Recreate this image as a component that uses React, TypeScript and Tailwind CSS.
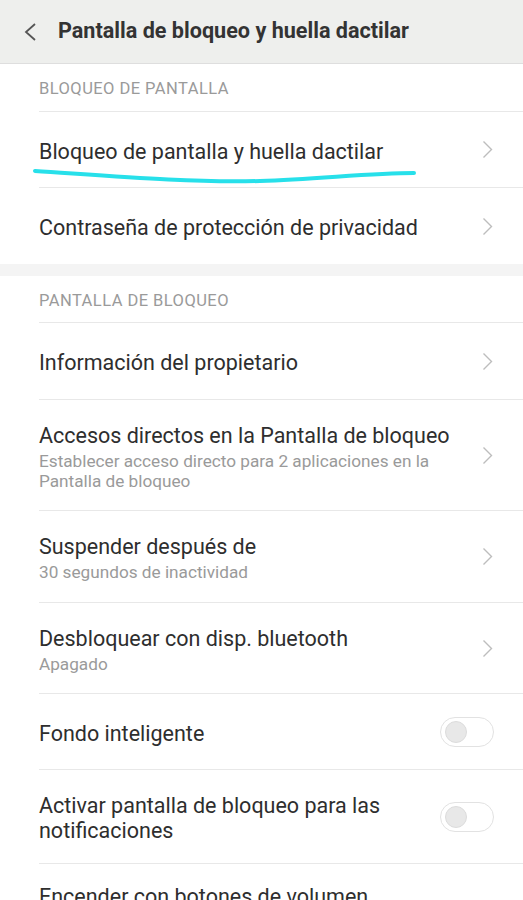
const font = { fontFamily: "Roboto, 'Noto Sans', sans-serif" };

function Chevron() {
  return (
    <svg width="11" height="19" viewBox="0 0 11 19" fill="none">
      <polyline points="1.5,1.5 9.5,9.5 1.5,17.5" stroke="#bdbdbd" strokeWidth="1.4" />
    </svg>
  );
}

function Toggle() {
  return (
    <div className="flex h-[30px] w-[54px] items-center rounded-full border border-[#e2e2e2] bg-white px-[4px]">
      <div className="h-[22px] w-[22px] rounded-full border border-[#dcdcdc] bg-[#e8e8e8]" />
    </div>
  );
}

function SectionHeader({ label, h }: { label: string; h: string }) {
  return (
    <div className="pl-[39px]">
      <div className={`flex items-center border-b border-[#e8e8e8] text-[16.5px] tracking-[0.45px] text-[#9a9a9a] ${h}`}>{label}</div>
    </div>
  );
}

function Row({
  title,
  sub,
  h,
  toggle,
  last,
}: {
  title: React.ReactNode;
  sub?: React.ReactNode;
  h: string;
  toggle?: boolean;
  last?: boolean;
}) {
  return (
    <div className="pl-[39px]">
      <div className={`flex items-center pr-[29px] ${h} ${last ? "" : "border-b border-[#e8e8e8]"}`}>
        <div className={`flex-1 pt-[3px] ${toggle ? "pr-[36px]" : "pr-[14px]"}`}>
          <div className="text-[21.5px] leading-[25px] text-[#2e2e2e]">{title}</div>
          {sub && <div className="mt-[3px] text-[17.2px] leading-[20px] text-[#9a9a9a]">{sub}</div>}
        </div>
        {toggle ? <Toggle /> : <div className="pr-[1px]"><Chevron /></div>}
      </div>
    </div>
  );
}

export default function App() {
  return (
    <div className="h-[900px] w-[523px] overflow-hidden bg-white" style={font}>
      {/* Header */}
      <div className="flex h-[64px] items-center border-b border-[#dedede] bg-[#eeefed]">
        <div className="pl-[24px] pr-[22px]">
          <svg width="12" height="18" viewBox="0 0 12 18" fill="none">
            <polyline points="11,1 2,9 11,17" stroke="#555" strokeWidth="1.8" />
          </svg>
        </div>
        <div className="text-[21.6px] font-bold text-[#333]">Pantalla de bloqueo y huella dactilar</div>
      </div>

      <SectionHeader label="BLOQUEO DE PANTALLA" h="h-[48px] pt-[4px]" />
      <div className="relative">
        <Row title="Bloqueo de pantalla y huella dactilar" h="h-[76px]" />
        <svg className="absolute left-0 top-0" width="523" height="80" viewBox="0 0 523 80" fill="none">
          <path
            d="M35 59 C 110 64, 190 71, 260 69 C 320 67, 370 61, 414 61"
            stroke="#27e0ea"
            strokeWidth="4"
            strokeLinecap="round"
          />
        </svg>
      </div>
      <Row title="Contraseña de protección de privacidad" h="h-[76px]" last />

      <div className="h-[12px] bg-[#f4f4f4]" />

      <SectionHeader label="PANTALLA DE BLOQUEO" h="h-[47px] pt-[4px]" />
      <Row title="Información del propietario" h="h-[77px]" />
      <Row
        title="Accesos directos en la Pantalla de bloqueo"
        sub="Establecer acceso directo para 2 aplicaciones en la Pantalla de bloqueo"
        h="h-[111px]"
      />
      <Row title="Suspender después de" sub="30 segundos de inactividad" h="h-[92px]" />
      <Row title="Desbloquear con disp. bluetooth" sub="Apagado" h="h-[91px]" />
      <Row title="Fondo inteligente" h="h-[76px]" toggle />
      <Row title="Activar pantalla de bloqueo para las notificaciones" h="h-[94px]" toggle />
      {/* last row, cut off by the screen edge */}
      <div className="pl-[39px] pt-[20px] text-[21.5px] leading-[25px] text-[#2e2e2e]">Encender con botones de volumen</div>
    </div>
  );
}
